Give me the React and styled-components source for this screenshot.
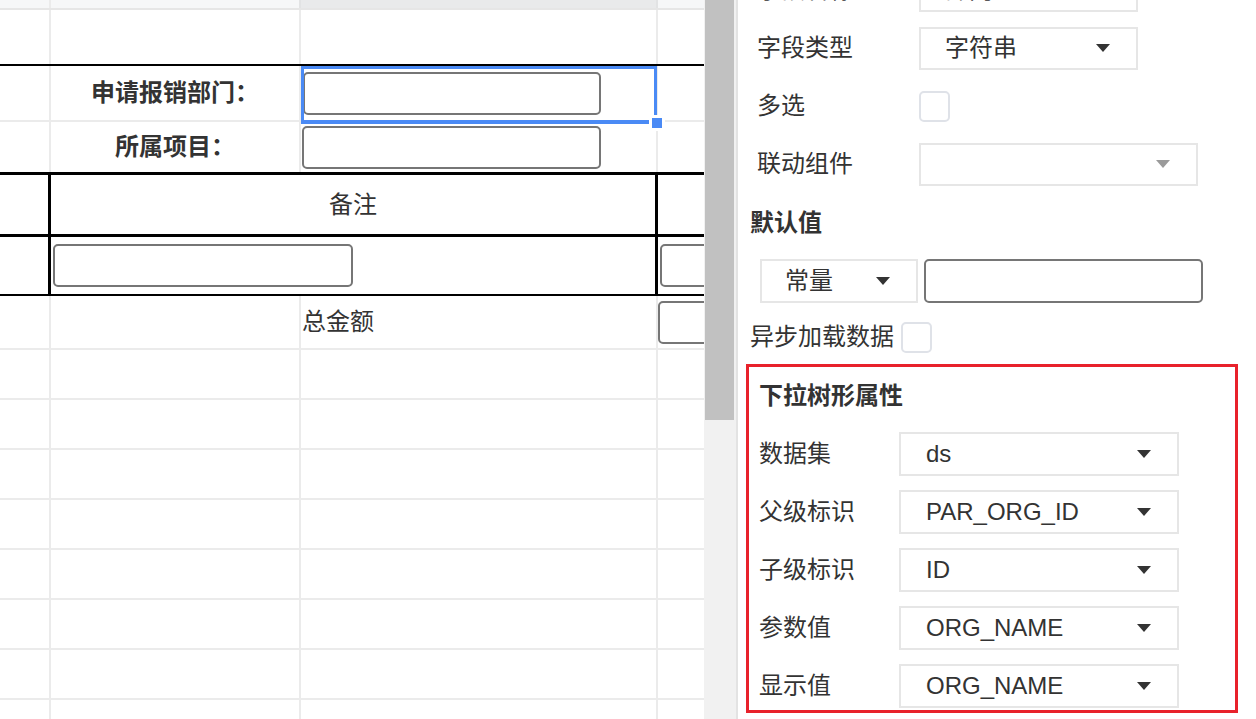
import React from 'react';
import styled, { createGlobalStyle } from 'styled-components';

const GlobalStyle = createGlobalStyle`
  html, body {
    margin: 0;
    padding: 0;
    background: #fff;
  }
  body {
    font-family: "Liberation Sans", "Noto Sans CJK SC", sans-serif;
    line-height: 30px;
    color: #333;
    overflow: hidden;
  }
`;

const Page = styled.div`
  display: flex;
  width: 1256px;
  height: 719px;
  overflow: hidden;
`;

/* ---------- sheet ---------- */

const Sheet = styled.div`
  width: 704px;
  flex: none;
  overflow: hidden;
`;

const SheetRow = styled.div`
  display: grid;
  grid-template-columns: 51px 250px 357px 120px;
  height: ${(p) => p.$h}px;
  border-bottom: ${(p) => p.$line || '2px solid #ebebeb'};
  box-sizing: border-box;
`;

const Cell = styled.div`
  display: flex;
  align-items: center;
  justify-content: ${(p) => (p.$center ? 'center' : 'flex-start')};
  padding-left: ${(p) => (p.$pad ?? 2)}px;
  grid-column: span ${(p) => p.$span || 1};
  border-right: ${(p) => p.$edge || '2px solid #ebebeb'};
  background: ${(p) => p.$bg || 'transparent'};
  position: relative;
  min-width: 0;
  box-sizing: border-box;
  font-size: 24px;
  font-weight: ${(p) => (p.$bold ? 700 : 400)};
  white-space: nowrap;
`;

const SheetInput = styled.input`
  width: ${(p) => p.$w || 298}px;
  height: 43px;
  flex: none;
  margin: 0;
  padding: 0 6px;
  border: 2px solid #767676;
  border-radius: 5px;
  box-sizing: border-box;
  background: #fff;
  outline: none;
`;

const Selection = styled.div`
  position: absolute;
  left: 0;
  top: 0;
  right: -1px;
  bottom: -4px;
  border: 3px solid #4a8af5;
  border-bottom-width: 4px;
  pointer-events: none;
  z-index: 2;
`;

const Handle = styled.div`
  position: absolute;
  right: -8px;
  bottom: -8px;
  width: 10px;
  height: 10px;
  background: #4a8af5;
  box-shadow: 0 0 0 3px #fff;
`;

const Scrollbar = styled.div`
  width: 34px;
  flex: none;
  padding: 0 2px 0 1px;
  background: #f1f1f1;
  border-right: 2px solid #e3e3e3;
  box-sizing: border-box;
`;

const Thumb = styled.div`
  height: 420px;
  background: #c1c1c1;
`;

/* ---------- property panel ---------- */

const Panel = styled.div`
  flex: 1;
  overflow: hidden;
  padding-left: 7px;
`;

const PanelInner = styled.div`
  margin-top: -39px;
`;

const FieldRow = styled.div`
  display: flex;
  align-items: center;
  height: ${(p) => p.$h || 58}px;
  padding-left: ${(p) => p.$indent || 0}px;
`;

const Label = styled.span`
  width: ${(p) => (p.$w ? `${p.$w}px` : 'auto')};
  flex: none;
  font-size: 24px;
  color: #333;
  white-space: nowrap;
`;

const Heading = styled.div`
  display: flex;
  align-items: center;
  height: ${(p) => p.$h || 59}px;
  padding-left: ${(p) => p.$indent || 0}px;
  font-size: 24px;
  font-weight: 700;
  color: #333;
`;

const Select = styled.div`
  display: flex;
  align-items: center;
  justify-content: space-between;
  width: ${(p) => p.$w}px;
  height: ${(p) => p.$h || 43}px;
  flex: none;
  padding: 0 26px 0 ${(p) => p.$pl || 24}px;
  border: 2px solid #e6e6e6;
  box-sizing: border-box;
  background: #fff;
  font-size: 24px;
  color: #333;
`;

const Caret = styled.span`
  width: 0;
  height: 0;
  flex: none;
  border-left: 7px solid transparent;
  border-right: 7px solid transparent;
  border-top: 8px solid ${(p) => (p.$muted ? '#9a9a9a' : '#333')};
`;

const Checkbox = styled.span`
  width: 31px;
  height: 31px;
  flex: none;
  margin-left: ${(p) => p.$gap || 0}px;
  border: 2px solid #dfe2e8;
  border-radius: 5px;
  box-sizing: border-box;
  background: #fff;
`;

const TextBox = styled.input`
  width: 279px;
  height: 44px;
  flex: none;
  margin: 0 0 0 6px;
  padding: 0 8px;
  border: 2px solid #767676;
  border-radius: 5px;
  box-sizing: border-box;
  outline: none;
`;

const TreeBox = styled.div`
  width: 492px;
  margin-left: 1px;
  padding: 14px 0 2px 10px;
  border: 3px solid #e8212b;
  box-sizing: border-box;
`;

const TreeHeading = styled.div`
  height: 30px;
  line-height: 30px;
  margin-bottom: 21px;
  font-size: 24px;
  font-weight: 700;
  color: #333;
`;

const TreeList = styled.div`
  display: flex;
  flex-direction: column;
  gap: 14px;
`;

const TreeRow = styled.div`
  display: flex;
  align-items: center;
`;

const BLACK2 = '2px solid #000';
const BLACK3 = '3px solid #000';

const treeFields = [
  ['数据集', 'ds'],
  ['父级标识', 'PAR_ORG_ID'],
  ['子级标识', 'ID'],
  ['参数值', 'ORG_NAME'],
  ['显示值', 'ORG_NAME'],
];

function SheetArea() {
  const emptyRows = Array.from({ length: 8 });
  return (
    <Sheet>
      <SheetRow $h={10} $line="2px solid #e6e6e6">
        <Cell $bg="#f6f7f8" />
        <Cell $bg="#f6f7f8" $edge="2px solid #e2e3e4" />
        <Cell $bg="#e9eaeb" $edge="2px solid #e2e3e4" />
        <Cell $bg="#f6f7f8" />
      </SheetRow>

      <SheetRow $h={56} $line={BLACK2}>
        <Cell />
        <Cell />
        <Cell />
        <Cell />
      </SheetRow>

      <SheetRow $h={56}>
        <Cell />
        <Cell $center $bold $pad={0}>申请报销部门：</Cell>
        <Cell>
          <SheetInput $w={298} />
          <Selection>
            <Handle />
          </Selection>
        </Cell>
        <Cell />
      </SheetRow>

      <SheetRow $h={53} $line={BLACK3}>
        <Cell />
        <Cell $center $bold $pad={0}>所属项目：</Cell>
        <Cell $pad={1}>
          <SheetInput $w={299} />
        </Cell>
        <Cell />
      </SheetRow>

      <SheetRow $h={62} $line={BLACK3}>
        <Cell $edge={BLACK3} />
        <Cell $span={2} $center $pad={0} $edge={BLACK3}>备注</Cell>
        <Cell />
      </SheetRow>

      <SheetRow $h={59} $line={BLACK2}>
        <Cell $edge={BLACK3} />
        <Cell $span={2} $edge={BLACK3}>
          <SheetInput $w={300} />
        </Cell>
        <Cell>
          <SheetInput $w={298} />
        </Cell>
      </SheetRow>

      <SheetRow $h={54}>
        <Cell />
        <Cell />
        <Cell $pad={1}>总金额</Cell>
        <Cell $pad={0}>
          <SheetInput $w={298} />
        </Cell>
      </SheetRow>

      {emptyRows.map((_, i) => (
        <SheetRow key={i} $h={50}>
          <Cell />
          <Cell />
          <Cell />
          <Cell />
        </SheetRow>
      ))}
    </Sheet>
  );
}

function PropertyPanel() {
  return (
    <Panel>
      <PanelInner>
        <FieldRow $indent={12}>
          <Label $w={162}>字段名称</Label>
          <Select $w={219}>
            部门
          </Select>
        </FieldRow>
        <FieldRow $indent={12}>
          <Label $w={162}>字段类型</Label>
          <Select $w={219}>
            字符串
            <Caret />
          </Select>
        </FieldRow>
        <FieldRow $indent={12}>
          <Label $w={162}>多选</Label>
          <Checkbox />
        </FieldRow>
        <FieldRow $indent={12}>
          <Label $w={162}>联动组件</Label>
          <Select $w={279}>
            <span />
            <Caret $muted />
          </Select>
        </FieldRow>

        <Heading $indent={5}>默认值</Heading>

        <FieldRow $indent={15}>
          <Select $w={158} $h={44} $pl={23}>
            常量
            <Caret />
          </Select>
          <TextBox />
        </FieldRow>
        <FieldRow $indent={5} $h={54}>
          <Label>异步加载数据</Label>
          <Checkbox $gap={7} />
        </FieldRow>

        <TreeBox>
          <TreeHeading>下拉树形属性</TreeHeading>
          <TreeList>
            {treeFields.map(([label, value]) => (
              <TreeRow key={label}>
                <Label $w={140}>{label}</Label>
                <Select $w={280} $h={44} $pl={25}>
                  {value}
                  <Caret />
                </Select>
              </TreeRow>
            ))}
          </TreeList>
        </TreeBox>
      </PanelInner>
    </Panel>
  );
}

export default function App() {
  return (
    <>
      <GlobalStyle />
      <Page>
        <SheetArea />
        <Scrollbar>
          <Thumb />
        </Scrollbar>
        <PropertyPanel />
      </Page>
    </>
  );
}
